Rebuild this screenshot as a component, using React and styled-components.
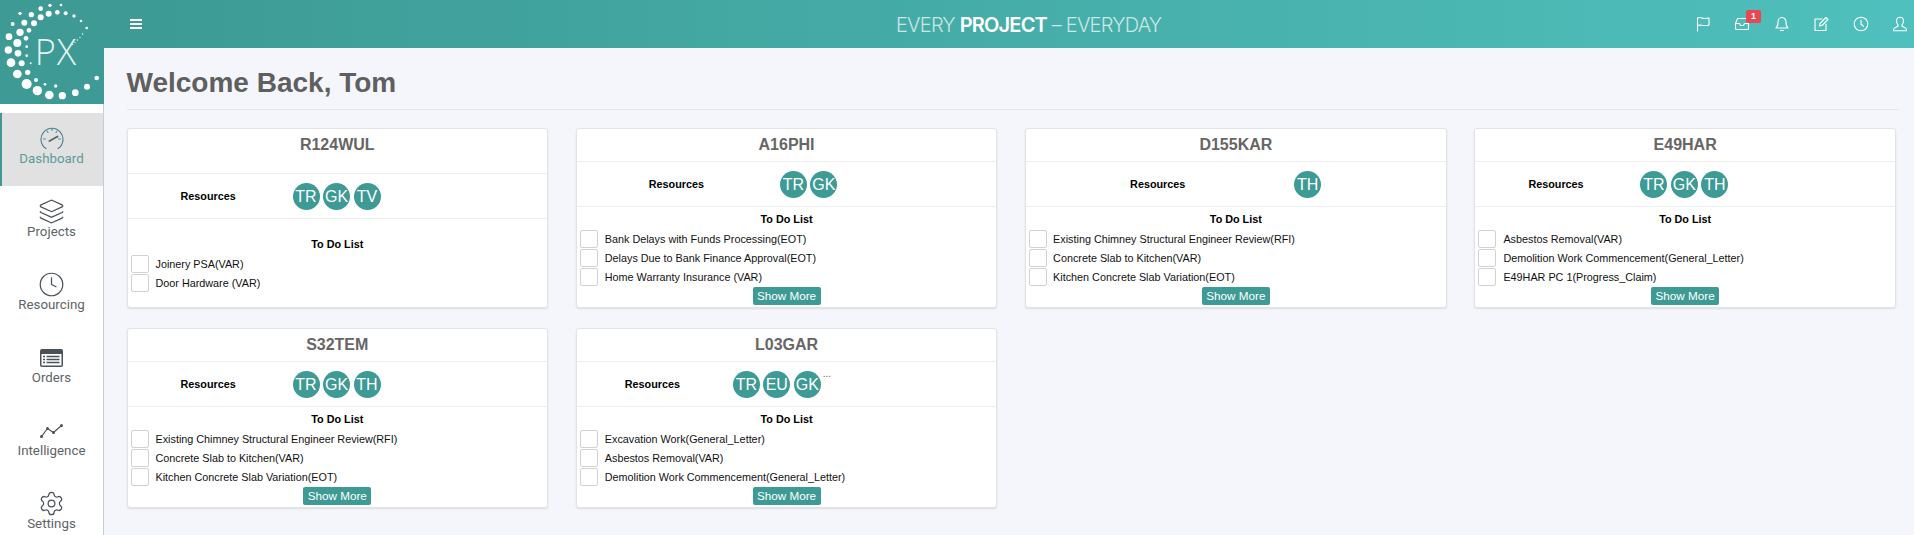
import React from 'react';
import styled, { createGlobalStyle } from 'styled-components';
import { Layers, Clock, Settings } from 'lucide-react';

const GlobalStyle = createGlobalStyle`
    html, body {
        margin: 0;
        padding: 0;
        background: #f4f6fb;
        font-family: "Liberation Sans", Arial, sans-serif;
    }
`;

const dots = [
    [150, 16, 5], [183, 15, 4], [122, 26, 7], [60, 40, 5], [94, 44, 8], [146, 41, 9], [172, 37, 7], [197, 40, 6],
    [222, 48, 5], [243, 63, 4], [260, 84, 4], [122, 52, 9], [102, 70, 9], [73, 68, 9], [38, 72, 6], [87, 91, 7],
    [60, 97, 11], [27, 110, 10], [78, 115, 7], [52, 129, 12], [25, 150, 11], [80, 140, 4], [54, 160, 10], [80, 167, 4],
    [33, 188, 13], [65, 190, 9], [92, 190, 3], [52, 222, 13], [83, 217, 8], [108, 240, 6], [80, 252, 15], [135, 253, 4],
    [112, 272, 14], [148, 285, 13], [167, 258, 5], [187, 287, 11], [226, 278, 10], [261, 260, 9], [290, 234, 7],
    [248, 102, 2], [240, 112, 2], [232, 120, 2], [225, 127, 2], [218, 133, 2],
];

const projects = [
    {
        code: 'R124WUL',
        tall: true,
        labelPad: 53,
        avatarGap: 58,
        people: ['TR', 'GK', 'TV'],
        todos: ['Joinery PSA(VAR)', 'Door Hardware (VAR)'],
    },
    {
        code: 'A16PHI',
        labelPad: 72,
        avatarGap: 77,
        people: ['TR', 'GK'],
        todos: ['Bank Delays with Funds Processing(EOT)', 'Delays Due to Bank Finance Approval(EOT)', 'Home Warranty Insurance (VAR)'],
        more: true,
    },
    {
        code: 'D155KAR',
        labelPad: 104,
        avatarGap: 110,
        people: ['TH'],
        textGap: 6,
        todos: ['Existing Chimney Structural Engineer Review(RFI)', 'Concrete Slab to Kitchen(VAR)', 'Kitchen Concrete Slab Variation(EOT)'],
        more: true,
    },
    {
        code: 'E49HAR',
        labelPad: 53,
        avatarGap: 58,
        people: ['TR', 'GK', 'TH'],
        todos: ['Asbestos Removal(VAR)', 'Demolition Work Commencement(General_Letter)', 'E49HAR PC 1(Progress_Claim)'],
        more: true,
    },
    {
        code: 'S32TEM',
        labelPad: 53,
        avatarGap: 58,
        people: ['TR', 'GK', 'TH'],
        todos: ['Existing Chimney Structural Engineer Review(RFI)', 'Concrete Slab to Kitchen(VAR)', 'Kitchen Concrete Slab Variation(EOT)'],
        more: true,
    },
    {
        code: 'L03GAR',
        labelPad: 48,
        avatarGap: 54,
        people: ['TR', 'EU', 'GK'],
        overflow: true,
        todos: ['Excavation Work(General_Letter)', 'Asbestos Removal(VAR)', 'Demolition Work Commencement(General_Letter)'],
        more: true,
    },
];

const Gauge = () => (
    <svg width="24" height="23" viewBox="0 0 24 23" fill="none" stroke="#3d9a94" strokeWidth="1.1" strokeLinecap="round">
        <path d="M6 21.5a11 11 0 1 1 12 0" stroke="#4d7f86" />
        <path d="M3.500 12h2M12 1.500v2M7 4l1 1.500M17 4l-1 1.500M20.500 12h-2" />
        <path d="M9.500 14l8-4.500" strokeWidth="2" stroke="#5b6b70" />
    </svg>
);

const OrdersIcon = () => (
    <svg width="23" height="18" viewBox="0 0 23 18">
        <rect x="0" y="0" width="23" height="18" rx="2" fill="#4a5157" />
        <rect x="1.500" y="5" width="20" height="11.500" fill="#fff" />
        <path d="M3 7.500h2M3 10.500h2M3 13.500h2M6.500 7.500h13M6.500 10.500h13M6.500 13.500h13" stroke="#4a5157" strokeWidth="1.500" />
    </svg>
);

const TrendIcon = () => (
    <svg width="23" height="14" viewBox="0 0 23 14" fill="none" stroke="#4a5157" strokeWidth="1.2">
        <path d="M1.500 12.500l6-8 6 4 8-7" />
        <g fill="#4a5157" stroke="none">
            <circle cx="1.500" cy="12.500" r="1.500" />
            <circle cx="7.500" cy="4.500" r="1.500" />
            <circle cx="13.500" cy="8.500" r="1.500" />
            <circle cx="21.500" cy="1.500" r="1.500" />
        </g>
    </svg>
);

const TopIcon = ({ children }) => (
    <svg width="16" height="16" viewBox="0 0 16 16" fill="none" stroke="#fff" strokeWidth="1.1" strokeLinecap="round" strokeLinejoin="round">
        {children}
    </svg>
);

const Logo = () => (
    <LogoBox>
        <svg width="104" height="104" viewBox="0 0 312 312">
            {dots.map(([x, y, r], i) => (
                <circle key={i} cx={x} cy={y} r={r} fill="#fff" />
            ))}
            <text x="104" y="195" fontFamily="Open Sans, sans-serif" fontWeight="300" fontSize="108" letterSpacing="3" fill="#e4f3f1">PX</text>
        </svg>
    </LogoBox>
);

const Card = ({ project }) => (
    <CardBox>
        <CardHead $tall={project.tall}>{project.code}</CardHead>
        <ResourceRow $pad={project.labelPad}>
            <ResourceLabel>Resources</ResourceLabel>
            <Avatars $gap={project.avatarGap}>
                {project.people.map((p) => (
                    <Avatar key={p}>{p}</Avatar>
                ))}
                {project.overflow && <Dots>...</Dots>}
            </Avatars>
        </ResourceRow>
        <TodoBlock $tall={project.tall}>
            <TodoTitle>To Do List</TodoTitle>
            {project.todos.map((t) => (
                <TodoRow key={t} $gap={project.textGap}>
                    <Check />
                    <span>{t}</span>
                </TodoRow>
            ))}
            {project.more && <MoreButton>Show More</MoreButton>}
        </TodoBlock>
    </CardBox>
);

const App = () => (
    <Page>
        <GlobalStyle />
        <Sidebar>
            <Logo />
            <Nav>
                <NavItem $active>
                    <IconSlot><Gauge /></IconSlot>
                    <span>Dashboard</span>
                </NavItem>
                <NavItem>
                    <IconSlot><Layers size={27} strokeWidth={1.1} color="#4a5157" /></IconSlot>
                    <span>Projects</span>
                </NavItem>
                <NavItem>
                    <IconSlot><Clock size={27} strokeWidth={1.1} color="#4a5157" /></IconSlot>
                    <span>Resourcing</span>
                </NavItem>
                <NavItem>
                    <IconSlot><OrdersIcon /></IconSlot>
                    <span>Orders</span>
                </NavItem>
                <NavItem>
                    <IconSlot><TrendIcon /></IconSlot>
                    <span>Intelligence</span>
                </NavItem>
                <NavItem>
                    <IconSlot><Settings size={27} strokeWidth={1.1} color="#4a5157" /></IconSlot>
                    <span>Settings</span>
                </NavItem>
            </Nav>
        </Sidebar>
        <Main>
            <TopBar>
                <Burger>
                    <i />
                    <i />
                    <i />
                </Burger>
                <Tagline>
                    EVERY <b>PROJECT</b> – EVERYDAY
                </Tagline>
                <TopIcons>
                    <TopIcon>
                        <path d="M2.500 15V2c3-1.500 4.500 .5 6.500 .5S12 2 14 2v7c-2 .8-3.500 .5-5.500 .5S5 8.500 2.500 9.500" />
                    </TopIcon>
                    <BadgeWrap>
                        <TopIcon>
                            <path d="M1.500 7.500L3.500 2.500h9l2 5v5a1 1 0 0 1-1 1h-11a1 1 0 0 1-1-1zM1.500 7.500h4l1 2h3l1-2h4" />
                        </TopIcon>
                        <Badge>1</Badge>
                    </BadgeWrap>
                    <TopIcon>
                        <path d="M8 1.500c-2.500 0-4 2-4 4.500 0 3-.8 5-2 6h12c-1.200-1-2-3-2-6 0-2.500-1.500-4.500-4-4.500zM6.500 14.500h3" />
                    </TopIcon>
                    <TopIcon>
                        <path d="M9 3H2v11.500h11V8M6.500 10l.5-2.500L13 1.500l2 2-6 6z" />
                    </TopIcon>
                    <TopIcon>
                        <circle cx="8" cy="8" r="6.800" />
                        <path d="M8 4v4.300l2.500 2" />
                    </TopIcon>
                    <TopIcon>
                        <path d="M8 1.200c-2 0-3.500 1.500-3.500 3.800 0 1.800.7 3 1.500 3.800v1.500c-1.500 1-4.500 1.500-4.500 3.500v1h13v-1c0-2-3-2.500-4.500-3.500V8.800c.8-.8 1.500-2 1.500-3.800 0-2.300-1.500-3.800-3.500-3.800z" />
                    </TopIcon>
                </TopIcons>
            </TopBar>
            <Content>
                <Heading>Welcome Back, Tom</Heading>
                <CardGrid>
                    {projects.map((p) => (
                        <Card key={p.code} project={p} />
                    ))}
                </CardGrid>
            </Content>
        </Main>
    </Page>
);

const Page = styled.div`
    display: flex;
    width: 1914px;
    height: 535px;
    overflow: hidden;
    background: #f4f6fb;
`;

const Sidebar = styled.div`
    width: 103px;
    flex-shrink: 0;
    background: #fff;
    border-right: 1px solid #c9cdd0;
`;

const LogoBox = styled.div`
    width: 104px;
    height: 104px;
    background: #3d9a94;
    & > svg {
        display: block;
    }
`;

const Nav = styled.div`
    display: flex;
    flex-direction: column;
    padding-top: 9px;
`;

const NavItem = styled.div`
    height: 73px;
    box-sizing: border-box;
    display: flex;
    flex-direction: column;
    align-items: center;
    padding: 14px 2px 0 0;
    border-left: 2px solid ${(p) => (p.$active ? '#3d9a94' : 'transparent')};
    background: ${(p) => (p.$active ? '#e1e1e1' : 'transparent')};
    color: ${(p) => (p.$active ? '#5b9b97' : '#5d6368')};
    font-family: Roboto, sans-serif;
    font-size: 13.300px;
    line-height: 18px;
`;

const IconSlot = styled.div`
    height: 23px;
    display: flex;
    align-items: center;
    justify-content: center;
`;

const Main = styled.div`
    flex: 1;
    min-width: 0;
    display: flex;
    flex-direction: column;
`;

const TopBar = styled.div`
    height: 48px;
    flex-shrink: 0;
    position: relative;
    display: flex;
    align-items: center;
    justify-content: space-between;
    padding: 0 6px 0 26px;
    background: linear-gradient(to right, #3d9a94, #4fc0bd);
`;

const Burger = styled.div`
    display: flex;
    flex-direction: column;
    gap: 2px;
    width: 12px;
    & > i {
        display: block;
        height: 2px;
        background: #fff;
    }
`;

const Tagline = styled.div`
    position: absolute;
    left: 792px;
    top: 12px;
    font-family: Inter, sans-serif;
    font-weight: 300;
    font-size: 20px;
    line-height: 26px;
    letter-spacing: -0.8px;
    color: rgba(255, 255, 255, 0.72);
    white-space: nowrap;
    & > b {
        font-weight: 600;
        color: #fff;
    }
`;

const TopIcons = styled.div`
    display: flex;
    align-items: center;
    gap: 23.500px;
`;

const BadgeWrap = styled.div`
    position: relative;
    display: flex;
`;

const Badge = styled.span`
    position: absolute;
    top: -6px;
    left: 12px;
    width: 15px;
    height: 13px;
    border-radius: 2px;
    background: #e8474f;
    color: #fff;
    font-size: 9px;
    font-weight: bold;
    line-height: 13px;
    text-align: center;
`;

const Content = styled.div`
    flex: 1;
    padding: 18px 15px 0 22.500px;
`;

const Heading = styled.h1`
    margin: 0;
    height: 43px;
    border-bottom: 1px solid #e4e6ea;
    font-size: 28px;
    line-height: 34px;
    font-weight: bold;
    color: #5f5f5f;
`;

const CardGrid = styled.div`
    display: grid;
    grid-template-columns: repeat(4, 421.500px);
    column-gap: 27.800px;
    row-gap: 20px;
    margin-top: 18px;
    align-items: start;
`;

const CardBox = styled.div`
    height: 180px;
    box-sizing: border-box;
    background: #fff;
    border: 1px solid #e2e3e5;
    border-radius: 3px;
    box-shadow: 0 1px 2px rgba(0, 0, 0, 0.1);
    display: flex;
    flex-direction: column;
`;

const CardHead = styled.div`
    height: ${(p) => (p.$tall ? '45px' : '33px')};
    box-sizing: border-box;
    padding-top: 7px;
    border-bottom: 1px solid #eeeeee;
    text-align: center;
    font-size: 16px;
    line-height: 18px;
    font-weight: bold;
    color: #666;
`;

const ResourceRow = styled.div`
    height: 45px;
    flex-shrink: 0;
    box-sizing: border-box;
    display: flex;
    align-items: center;
    padding-left: ${(p) => p.$pad}px;
    border-bottom: 1px solid #eeeeee;
`;

const ResourceLabel = styled.div`
    width: 54px;
    white-space: nowrap;
    font-size: 10.800px;
    font-weight: bold;
    color: #000;
`;

const Avatars = styled.div`
    position: relative;
    display: flex;
    gap: 3.500px;
    margin-left: ${(p) => p.$gap}px;
`;

const Avatar = styled.div`
    width: 27px;
    height: 27px;
    border-radius: 50%;
    background: #3d9a94;
    color: #fff;
    font-size: 16px;
    line-height: 27px;
    text-align: center;
`;

const Dots = styled.span`
    position: absolute;
    left: 100%;
    top: -3px;
    margin-left: 2px;
    font-size: 10px;
    color: #555;
`;

const TodoBlock = styled.div`
    flex: 1;
    display: flex;
    flex-direction: column;
    padding: ${(p) => (p.$tall ? '13px' : '0')} 2px 0;
    font-size: 10.800px;
    color: #111;
`;

const TodoTitle = styled.div`
    text-align: center;
    font-size: 10.800px;
    font-weight: bold;
    line-height: 13px;
    margin: 6px 0 3px;
    color: #000;
`;

const TodoRow = styled.div`
    display: flex;
    align-items: center;
    height: 19px;
    gap: ${(p) => p.$gap || 7}px;
    padding-left: 1px;
    white-space: nowrap;
`;

const Check = styled.div`
    width: 18px;
    height: 18px;
    box-sizing: border-box;
    border: 1px solid #d2d2d2;
    border-radius: 2px;
    background: #fff;
`;

const MoreButton = styled.button`
    align-self: center;
    margin-top: 1px;
    width: 68px;
    height: 18px;
    padding: 0;
    border: none;
    border-radius: 2px;
    background: #3d9a94;
    color: #fff;
    font-family: "Liberation Sans", Arial, sans-serif;
    font-size: 11.700px;
    line-height: 18px;
`;

export default App;
